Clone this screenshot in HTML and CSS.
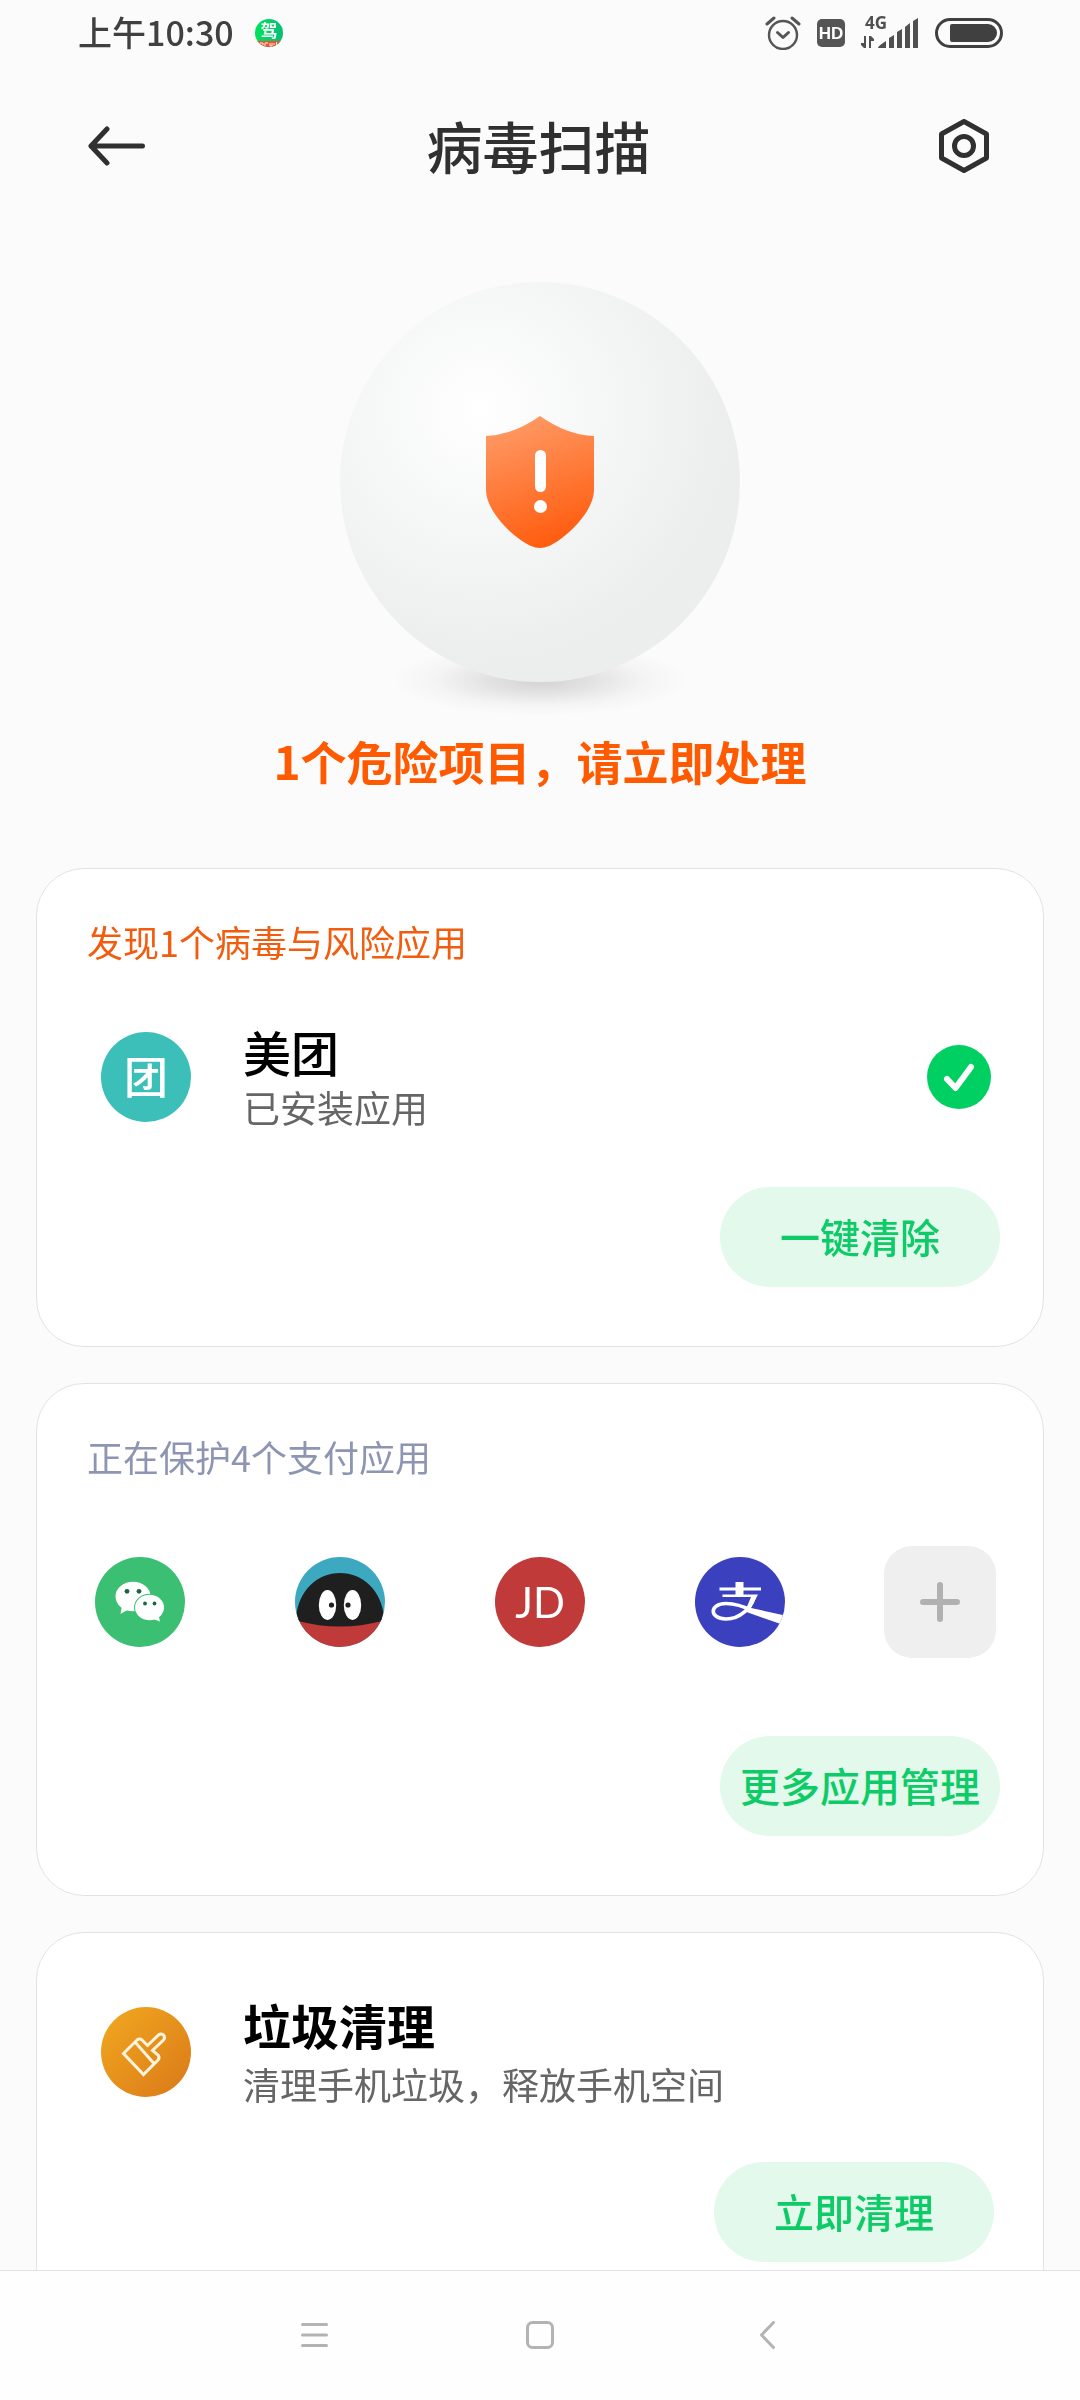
FILE: index.html
```html
<!DOCTYPE html>
<html lang="zh-CN">
<head>
<meta charset="utf-8">
<meta name="viewport" content="width=device-width, initial-scale=1">
<title>病毒扫描</title>
<link rel="stylesheet" href="styles.css">
</head>
<body>
<div class="status-bar">
  <div class="status-left">
    <span class="clock">上午10:30</span>
    <svg class="app-badge" width="28" height="28" viewBox="0 0 28 28" aria-hidden="true">
      <defs>
        <clipPath id="badge-clip"><circle cx="14" cy="14" r="14"/></clipPath>
        <linearGradient id="badge-fill" x1="0" y1="0" x2="1" y2="0"><stop offset="0" stop-color="#00e35b"/><stop offset="1" stop-color="#06bd76"/></linearGradient>
      </defs>
      <g clip-path="url(#badge-clip)">
        <rect width="28" height="28" fill="url(#badge-fill)"/>
        <rect y="22" width="28" height="6" fill="#e8563a"/>
        <path d="M5 24h3v2M10 27v-3h3M15 24v3h2v-3M19 24v2M21.500 23v3" fill="none" stroke="#ffe9dc" stroke-width="1"/>
      </g>
      <text x="14" y="18" class="badge-text">驾</text>
    </svg>
  </div>
  <div class="status-right">
    <svg width="36" height="34" viewBox="0 0 36 34" fill="none" stroke="#555" stroke-linecap="round" aria-hidden="true">
      <circle cx="18" cy="19" r="14" stroke-width="2.400"/>
      <path d="M12.500 16.500L18 21.500L23.500 16.500" stroke-width="3" stroke-linejoin="round"/>
      <path d="M2 8L9 2M27 2L34 8" stroke-width="3"/>
    </svg>
    <svg width="28" height="28" viewBox="0 0 28 28" aria-hidden="true">
      <rect width="28" height="28" rx="5" fill="#555"/>
      <text x="14" y="20" class="hd-text">HD</text>
    </svg>
    <svg class="signal" width="58" height="34" viewBox="0 0 58 34" fill="#505050" aria-hidden="true">
      <text x="4" y="13" class="net-text">4G</text>
      <path d="M3 20h2v12h-2zM3 32l-3-3v-2h3zM8 20h2v12h-2zM10 20l3 3v2h-3z"/>
      <path d="M17 32Q17 30 25 25V32zM28 22L33 19V32H28zM36 16L41 13V32H36zM44 11L49 7V32H44zM52 5L57 2V32H52z"/>
    </svg>
    <svg width="68" height="30" viewBox="0 0 68 30" aria-hidden="true">
      <rect x="1.500" y="1.500" width="65" height="27" rx="13.500" fill="none" stroke="#404040" stroke-width="3"/>
      <path d="M17 6H53A9 9 0 0 1 53 24H17Q15 24 15 22V8Q15 6 17 6z" fill="#404040"/>
    </svg>
  </div>
</div>

<header class="app-header">
  <button class="icon-button" type="button" aria-label="返回">
    <svg width="58" height="40" viewBox="0 0 58 40" fill="none" stroke="#303030" stroke-width="5" stroke-linecap="round" stroke-linejoin="round"><path d="M19 3L3 20L19 37M3 20H54.500"/></svg>
  </button>
  <h1 class="app-title">病毒扫描</h1>
  <button class="icon-button icon-button-end" type="button" aria-label="设置">
    <svg width="50" height="54" viewBox="0 0 50 54" fill="none" stroke="#303030" stroke-width="5" stroke-linejoin="round"><path d="M25 2.500L47.500 15V39L25 51.500L2.500 39V15z"/><circle cx="25" cy="27" r="9.500"/></svg>
  </button>
</header>

<main class="content">
  <section class="hero">
    <div class="orb">
      <svg width="108" height="132" viewBox="0 0 108 132" aria-hidden="true">
        <defs><linearGradient id="shield-fill" x1="0.300" y1="0" x2="0.600" y2="1"><stop offset="0" stop-color="#ff9a66"/><stop offset="1" stop-color="#ff5b0c"/></linearGradient></defs>
        <path d="M54 0Q81 19 108 20V75C107 97 79 123 63 130Q54 134 45 130C29 123 1 97 0 75V20Q27 19 54 0z" fill="url(#shield-fill)"/>
        <rect x="49" y="34" width="11" height="42" rx="5.500" fill="#fff"/>
        <circle cx="54.500" cy="90.500" r="6.500" fill="#fff"/>
      </svg>
    </div>
    <h2 class="headline">1个危险项目，请立即处理</h2>
  </section>

  <section class="card">
    <h3 class="card-title card-title-danger">发现1个病毒与风险应用</h3>
    <div class="item">
      <svg class="item-icon" width="90" height="90" viewBox="0 0 90 90" aria-hidden="true">
        <circle cx="45" cy="45" r="45" fill="#3cbfb9"/>
        <text x="45" y="62" class="meituan-text">团</text>
      </svg>
      <div class="item-text">
        <label class="item-name" for="pick-meituan">美团</label>
        <p class="item-desc">已安装应用</p>
      </div>
      <input class="check" type="checkbox" id="pick-meituan" checked>
    </div>
    <button class="pill" type="button">一键清除</button>
  </section>

  <section class="card card-pay">
    <h3 class="card-title card-title-muted">正在保护4个支付应用</h3>
    <div class="apps">
      <svg width="90" height="90" viewBox="0 0 90 90" role="img" aria-label="微信">
        <circle cx="45" cy="45" r="45" fill="#3bc073"/>
        <path d="M27 49L25.500 57L34 52z" fill="#fff"/>
        <ellipse cx="38" cy="39.500" rx="17.500" ry="14.700" fill="#fff"/>
        <ellipse cx="54.500" cy="50.500" rx="15.500" ry="13.800" fill="#3bc073"/>
        <ellipse cx="54.500" cy="50.500" rx="14.500" ry="12.800" fill="#fff"/>
        <path d="M58 62L65 64.500L63.500 58z" fill="#fff"/>
        <g fill="#1f6440"><circle cx="32" cy="34.300" r="2.400"/><circle cx="44" cy="34.300" r="2.400"/><circle cx="50" cy="46.500" r="1.900"/><circle cx="59.500" cy="46.500" r="1.900"/></g>
      </svg>
      <svg width="90" height="90" viewBox="0 0 90 90" role="img" aria-label="云闪付">
        <defs><clipPath id="ninja-clip"><circle cx="45" cy="45" r="45"/></clipPath></defs>
        <g clip-path="url(#ninja-clip)">
          <rect width="90" height="90" fill="#3da9c1"/>
          <path d="M0 61Q45 77 90 61V90H0z" fill="#c03a3a"/>
          <path d="M1 61C3 33 23 16 45 16S87 33 89 61L87 64Q45 75 3 64z" fill="#1f1f1f"/>
          <g fill="#fff"><ellipse cx="32.500" cy="48" rx="8.700" ry="15"/><ellipse cx="57.500" cy="48" rx="8.700" ry="15"/></g>
          <circle cx="36.500" cy="48" r="2.600" fill="#1f1f1f"/><circle cx="53" cy="48" r="2.600" fill="#1f1f1f"/>
        </g>
      </svg>
      <svg width="90" height="90" viewBox="0 0 90 90" role="img" aria-label="京东">
        <circle cx="45" cy="45" r="45" fill="#c03a3a"/>
        <text x="45" y="61" class="jd-text">JD</text>
      </svg>
      <svg width="90" height="90" viewBox="0 0 90 90" role="img" aria-label="支付宝">
        <defs><clipPath id="pay-clip"><circle cx="45" cy="45" r="45"/></clipPath></defs>
        <g clip-path="url(#pay-clip)">
          <rect width="90" height="90" fill="#3b40bf"/>
          <path d="M24.500 30.500H40.500V25H48.500V30.500H66V33.500H48.500V37.500H63L56 51L90 58.500V68.500L50 54.500L56 40H27.500V37.500H40.500V33.500H24.500z" fill="#fff"/>
          <path d="M59 41C56 50 46 62 31 62C14 62 14 46.500 31 46.500C40 46.500 50 50 58 54" fill="none" stroke="#fff" stroke-width="3.600"/>
        </g>
      </svg>
      <button class="add" type="button" aria-label="添加应用">
        <svg width="40" height="40" viewBox="0 0 40 40" stroke="#b1b1b1" stroke-width="6" stroke-linecap="round"><path d="M3 20H37M20 3V37"/></svg>
      </button>
    </div>
    <button class="pill" type="button">更多应用管理</button>
  </section>

  <section class="card card-clean">
    <div class="item">
      <svg class="item-icon" width="90" height="90" viewBox="0 0 90 90" aria-hidden="true">
        <defs><linearGradient id="clean-fill" x1="0" y1="0" x2="1" y2="1"><stop offset="0.100" stop-color="#efa41f"/><stop offset="0.900" stop-color="#dc7d19"/></linearGradient></defs>
        <circle cx="45" cy="45" r="45" fill="url(#clean-fill)"/>
        <path d="M22.500 46.500L36 33Q38.500 31 41 33L46.500 38.500L57.500 28Q60 26 62.500 28Q64.500 30.500 62.500 33L51.500 43.500L57 48Q59 50.500 57 53L42.500 67.500zM34 35L52.500 56" fill="none" stroke="#fff3dc" stroke-width="3"/>
      </svg>
      <div class="item-text item-text-loose">
        <h3 class="item-name item-name-strong">垃圾清理</h3>
        <p class="item-desc">清理手机垃圾，释放手机空间</p>
      </div>
    </div>
    <button class="pill" type="button">立即清理</button>
  </section>
</main>

<nav class="nav-bar" aria-label="系统导航">
  <button class="nav-button" type="button" aria-label="最近任务">
    <svg width="28" height="28" viewBox="0 0 28 28" fill="none" stroke="#b3b3b3" stroke-width="3" stroke-linecap="round"><path d="M2.500 3.500H26.500M2.500 14H26.500M2.500 24.500H26.500"/></svg>
  </button>
  <button class="nav-button" type="button" aria-label="主屏幕">
    <svg width="28" height="28" viewBox="0 0 28 28" fill="none" stroke="#b3b3b3" stroke-width="3"><rect x="1.500" y="1.500" width="25" height="25" rx="5"/></svg>
  </button>
  <button class="nav-button" type="button" aria-label="返回上一页">
    <svg width="28" height="28" viewBox="0 0 28 28" fill="none" stroke="#b3b3b3" stroke-width="3" stroke-linecap="round" stroke-linejoin="round"><path d="M21.500 1.500L9.500 14L21.500 26.500"/></svg>
  </button>
</nav>
</body>
</html>
```
FILE: styles.css
```css
* {
  box-sizing: border-box;
}

body {
  margin: 0;
  height: 100vh;
  display: flex;
  flex-direction: column;
  background: #fbfbfb;
  color: #303030;
  font-family: "Noto Sans CJK SC", sans-serif;
}

h1, h2, h3, p {
  margin: 0;
}

button {
  padding: 0;
  border: 0;
  background: none;
  font-family: inherit;
  cursor: pointer;
}

svg {
  display: block;
}

/* Status bar */
.status-bar {
  flex: none;
  height: 66px;
  padding: 0 77px 0 78px;
  display: flex;
  align-items: center;
  justify-content: space-between;
}

.status-left {
  display: flex;
  align-items: center;
  gap: 21px;
}

.clock {
  font-size: 34px;
  line-height: 48px;
  padding-bottom: 2px;
  font-weight: 500;
  color: #404040;
}

.status-right {
  display: flex;
  align-items: center;
  gap: 16px;
}

.app-badge,
.signal {
  overflow: visible;
}

.badge-text {
  font-size: 17px;
  font-weight: 700;
  fill: #fff;
  text-anchor: middle;
}

.hd-text {
  font-family: "Liberation Sans", sans-serif;
  font-size: 17px;
  font-weight: 700;
  fill: #fff;
  text-anchor: middle;
}

.net-text {
  font-family: "Open Sans", sans-serif;
  font-size: 17px;
  font-weight: 700;
}

/* Title bar */
.app-header {
  flex: none;
  height: 160px;
  padding: 0 91px 0 88px;
  display: grid;
  grid-template-columns: 1fr auto 1fr;
  align-items: center;
}

.app-title {
  font-size: 56px;
  line-height: 80px;
  padding-bottom: 2px;
  font-weight: 500;
}

.icon-button {
  justify-self: start;
}

.icon-button-end {
  justify-self: end;
}

/* Scrolling content */
.content {
  flex: 1;
  min-height: 0;
  overflow-y: auto;
  scrollbar-width: none;
  padding: 56px 36px 36px;
}

.hero {
  display: flex;
  flex-direction: column;
  align-items: center;
  margin-bottom: 78px;
}

.orb {
  position: relative;
  width: 400px;
  height: 400px;
  display: flex;
  align-items: center;
  justify-content: center;
  border-radius: 50%;
  background: radial-gradient(circle at 35% 32%, #fff 0, #f4f5f5 140px, #eceeed 250px);
}

.orb::before {
  content: "";
  position: absolute;
  z-index: -1;
  left: 52px;
  right: 52px;
  bottom: -34px;
  height: 72px;
  background: radial-gradient(closest-side, #d2d2d2 0, #e2e2e2 35%, #f4f4f4 70%, #fbfbfb 100%);
}

.headline {
  margin-top: 48px;
  font-size: 46px;
  line-height: 60px;
  font-weight: 700;
  color: #ff5a00;
}

/* Cards */
.card {
  display: flex;
  flex-direction: column;
  margin-bottom: 36px;
  padding: 46px 43px 59px 50px;
  border: 1px solid #e2e2e2;
  border-radius: 48px;
  background: #fff;
}

.card-title {
  font-size: 36px;
  line-height: 52px;
  font-weight: 400;
}

.card-title-danger {
  color: #f25c0e;
}

.card-title-muted {
  color: #8d95b2;
}

.item {
  display: flex;
  align-items: center;
  margin: 54px 9px 54px 14px;
}

.item-icon {
  flex: none;
  margin-right: 52px;
}

.item-text {
  flex: 1;
  display: flex;
  flex-direction: column;
}

.item-text-loose {
  gap: 4px;
}

.item-name {
  font-size: 48px;
  line-height: 60px;
  font-weight: 500;
  color: #000;
}

.item-name-strong {
  font-weight: 700;
}

.item-desc {
  font-size: 37px;
  line-height: 52px;
  color: #666;
}

.check {
  appearance: none;
  flex: none;
  width: 64px;
  height: 64px;
  margin: 0;
  border: 3px solid #c8c8c8;
  border-radius: 50%;
}

.check:checked {
  border: 0;
  background: #00d062 url("data:image/svg+xml,%3Csvg xmlns='http://www.w3.org/2000/svg' viewBox='0 0 64 64' fill='none' stroke='%23fff' stroke-width='6' stroke-linecap='round' stroke-linejoin='round'%3E%3Cpath d='M20 34L28.500 43L44 22'/%3E%3C/svg%3E");
}

.meituan-text {
  font-size: 44px;
  font-weight: 500;
  fill: #fff;
  text-anchor: middle;
}

.jd-text {
  font-family: Lato, sans-serif;
  font-size: 42px;
  fill: #fff;
  text-anchor: middle;
}

.pill {
  align-self: flex-end;
  width: 280px;
  height: 100px;
  padding-bottom: 2px;
  border-radius: 50px;
  background: #e2f9ec;
  color: #0dcb66;
  font-size: 40px;
  line-height: 56px;
  font-weight: 500;
}

.card-pay .apps {
  display: grid;
  grid-template-columns: repeat(5, 1fr);
  place-items: center;
  margin: 64px -40px 78px -47px;
}

.add {
  width: 112px;
  height: 112px;
  display: flex;
  align-items: center;
  justify-content: center;
  border-radius: 28px;
  background: #efefef;
}

.card-clean {
  padding-top: 61px;
  padding-right: 49px;
}

.card-clean .item {
  margin-top: 0;
  margin-bottom: 52px;
}

/* System navigation */
.nav-bar {
  flex: none;
  height: 130px;
  padding-bottom: 2px;
  display: flex;
  align-items: center;
  justify-content: center;
  border-top: 1px solid #e2e2e2;
  background: #fefefe;
}

.nav-button {
  width: 226px;
  height: 100%;
  display: flex;
  align-items: center;
  justify-content: center;
}
```
